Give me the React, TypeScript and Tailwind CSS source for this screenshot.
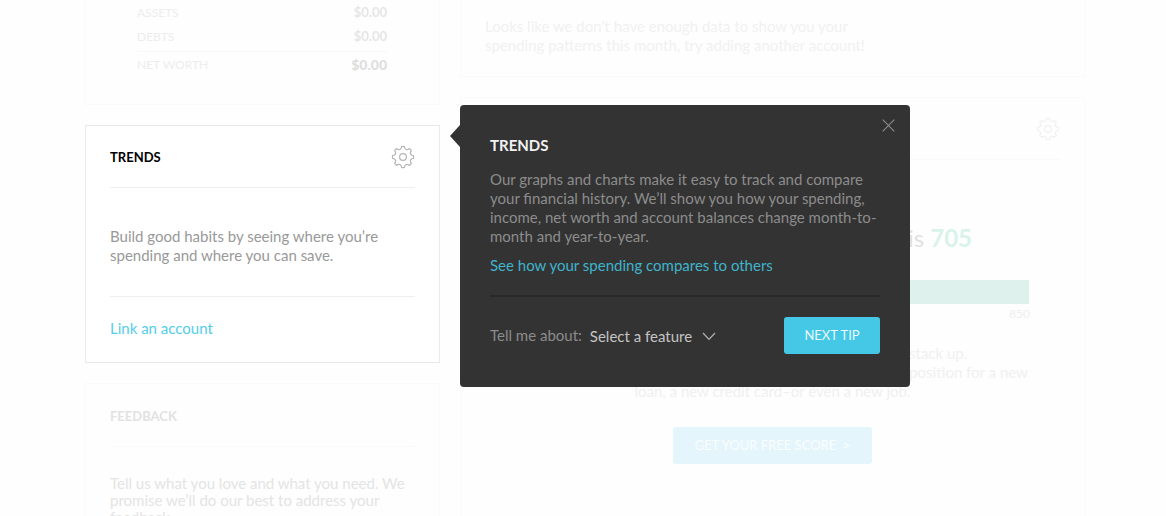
import React, { useState } from 'react';

interface IconProps {
  className?: string;
}

interface CardProps {
  className?: string;
  active?: boolean;
  children: React.ReactNode;
}

const features = ['Trends', 'Budgets', 'Goals', 'Accounts'];

const balances = [
  { label: 'ASSETS', value: '$0.00' },
  { label: 'DEBTS', value: '$0.00' },
];

const gearPoint = (angle: number, radius: number) => {
  const rad = (angle * Math.PI) / 180;
  return `${(12 + radius * Math.sin(rad)).toFixed(2)} ${(12 - radius * Math.cos(rad)).toFixed(2)}`;
};

// eight flat teeth with rounded valleys between them
const gearPath =
  Array.from({ length: 8 }, (_, i) => {
    const a = i * 45;
    return `${i === 0 ? 'M' : 'L'}${gearPoint(a - 8, 10.5)} Q${gearPoint(a, 10.8)} ${gearPoint(
      a + 8,
      10.5
    )} L${gearPoint(a + 11, 9.1)} Q${gearPoint(a + 22.5, 7.4)} ${gearPoint(a + 34, 9.1)}`;
  }).join(' ') + ' Z';

const GearIcon = ({ className }: IconProps) => (
  <svg
    className={className}
    width="24"
    height="24"
    viewBox="0 0 24 24"
    fill="none"
    stroke="currentColor"
    strokeWidth="1.2"
    strokeLinejoin="round"
    aria-hidden="true"
  >
    <path d={gearPath} />
    <circle cx="12" cy="12" r="3.4" />
  </svg>
);

const Card = ({ className = '', active, children }: CardProps) => (
  <section
    className={`border px-6 ${
      active ? 'border-[#e9e9e9] bg-white' : 'border-[#fafafa] bg-[#fefefe]'
    } ${className}`}
  >
    {children}
  </section>
);

const TipPopover = ({ onClose }: { onClose: () => void }) => {
  const [feature, setFeature] = useState('');

  return (
    <div
      role="dialog"
      aria-labelledby="tip-title"
      className="absolute -top-5 left-full z-10 ml-5 w-[450px] rounded bg-[#333333] px-[30px] pt-[30px] pb-[33px]"
    >
      <svg
        className="absolute top-5 -left-[10px] text-[#333333]"
        width="10"
        height="22"
        viewBox="0 0 10 22"
        fill="currentColor"
        aria-hidden="true"
      >
        <path d="M10 0 L0 11 L10 22 Z" />
      </svg>
      <button
        type="button"
        aria-label="Close"
        onClick={onClose}
        className="absolute top-[14px] right-[15px] text-[#8c8c8c]"
      >
        <svg width="13" height="13" viewBox="0 0 13 13" stroke="currentColor" strokeWidth="1.1">
          <path d="M0.7 0.7 L12.3 12.3 M12.3 0.7 L0.7 12.3" />
        </svg>
      </button>
      <h2 id="tip-title" className="text-[15px] leading-5 font-bold text-[#f2f2f2]">
        TRENDS
      </h2>
      <p className="mt-[15px] text-[15px] leading-[19px] text-[#8c8c8c]">
        Our graphs and charts make it easy to track and compare
        <br />
        your financial history. We’ll show you how your spending,
        <br />
        income, net worth and account balances change month-to-
        <br />
        month and year-to-year.
      </p>
      <a href="#compare" className="mt-[10px] block text-[15px] leading-[19px] text-[#3fb3cc]">
        See how your spending compares to others
      </a>
      <div className="mt-5 flex items-center border-t-2 border-[#292929] pt-5">
        <label htmlFor="feature" className="text-[15px] text-[#8c8c8c]">
          Tell me about:
        </label>
        <div className="relative ml-2">
          <select
            id="feature"
            value={feature}
            onChange={(e) => setFeature(e.target.value)}
            className="w-[126px] appearance-none bg-transparent text-[15px] text-[#c4c4c4]"
          >
            <option value="">Select a feature</option>
            {features.map((name) => (
              <option key={name} value={name}>
                {name}
              </option>
            ))}
          </select>
          <svg
            className="pointer-events-none absolute top-2 right-0 text-[#b0b0b0]"
            width="14"
            height="9"
            viewBox="0 0 14 9"
            fill="none"
            stroke="currentColor"
            strokeWidth="1.3"
            aria-hidden="true"
          >
            <path d="M1 1 L7 7.4 L13 1" />
          </svg>
        </div>
        <button
          type="button"
          className="ml-auto h-[37px] w-24 rounded-[3px] bg-[#45c8e6] text-[13px] text-[#e8f8fc]"
        >
          NEXT TIP
        </button>
      </div>
    </div>
  );
};

const App = () => {
  const [tipOpen, setTipOpen] = useState(true);

  return (
    <main className="flex h-screen items-start gap-5 overflow-hidden bg-[#fefefe] pr-[81px] pl-[85px] font-['Lato','Liberation_Sans',sans-serif]">
      <div className="w-[355px] shrink-0">
        <Card className="border-t-0 pt-px pb-[27px]">
          <dl className="mr-7 ml-[27px] text-xs text-[#ededed]">
            {balances.map(({ label, value }) => (
              <div key={label} className="flex h-6 items-center justify-between">
                <dt>{label}</dt>
                <dd className="text-[13px] font-bold text-[#e6e6e6]">{value}</dd>
              </div>
            ))}
            <div className="mt-[2px] flex h-[26px] items-center justify-between border-t border-[#f8f8f8]">
              <dt>NET WORTH</dt>
              <dd className="text-sm font-black text-[#dedede]">{'$0.00'}</dd>
            </div>
          </dl>
        </Card>

        <div className="relative mt-5">
          <Card active>
            <header className="flex h-[62px] items-center justify-between border-b border-[#efefef]">
              <h2 className="pt-[3px] text-[13px] font-bold text-black">TRENDS</h2>
              <button type="button" aria-label="Trends settings" className="text-[#b5b5b5]">
                <GearIcon />
              </button>
            </header>
            <p className="border-b border-[#efefef] pt-[39px] pb-[31px] text-[15px] leading-[19px] text-[#999999]">
              Build good habits by seeing where you’re
              <br />
              spending and where you can save.
            </p>
            <a
              href="#link"
              className="block pt-[22px] pb-6 text-[15px] leading-[19px] text-[#54cde9]"
            >
              Link an account
            </a>
          </Card>
          {tipOpen && <TipPopover onClose={() => setTipOpen(false)} />}
        </div>

        <Card className="mt-5 pb-6">
          <h2 className="flex h-[63px] items-center border-b border-[#f9f9f9] pt-[3px] text-[13px] font-bold text-[#e2e2e2]">
            FEEDBACK
          </h2>
          <p className="pt-7 text-[15px] leading-[17px] text-[#e4e4e4]">
            Tell us what you love and what you need. We
            <br />
            promise we’ll do our best to address your
            <br />
            feedback.
          </p>
        </Card>
      </div>

      <div className="min-w-0 flex-1">
        <Card className="border-t-0 pt-[17px] pb-[21px]">
          <p className="text-[15px] leading-[19px] text-[#f1f1f1]">
            Looks like we don’t have enough data to show you your
            <br />
            spending patterns this month, try adding another account!
          </p>
        </Card>

        <Card className="mt-5 pb-20">
          <header className="flex h-[62px] items-center justify-between border-b border-[#f9f9f9]">
            <h2 className="text-[13px] font-bold text-[#e2e2e2]">CREDIT SCORE</h2>
            <button type="button" aria-label="Credit score settings" className="text-[#f1f1f1]">
              <GearIcon />
            </button>
          </header>
          <p className="mt-[62px] pr-[88px] text-right text-2xl leading-8 text-[#e0e0e0]">
            Your estimated credit score is <b className="text-[#d9f3ea]">705</b>
          </p>
          <div className="mx-[31px] mt-[26px] h-6 bg-[#dff1ec]" />
          <div className="mx-[30px] flex justify-between text-xs leading-5 text-[#efefef]">
            <span>300</span>
            <span>850</span>
          </div>
          <p className="mt-5 text-center text-[15px] leading-[19px] text-[#f0f0f0]">
            Review your credit score for free and see how you stack up.
            <br />
            Knowing where you stand today can help put you in a good position for a new
            <br />
            loan, a new credit card–or even a new job.
          </p>
          <button
            type="button"
            className="mx-auto mt-[26px] block h-[37px] w-[199px] rounded-[3px] bg-[#e4f6fb] text-[13px] text-[#fafdfe]"
          >
            GET YOUR FREE SCORE &nbsp;&gt;
          </button>
        </Card>
      </div>
    </main>
  );
};

export default App;
